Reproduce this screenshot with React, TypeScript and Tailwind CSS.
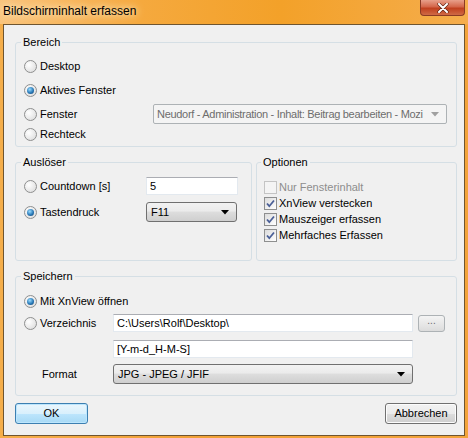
import React from 'react';

function Radio({ checked }: { checked?: boolean }) {
  return (
    <span className="flex h-[13px] w-[13px] shrink-0 items-center justify-center rounded-full border border-[#8e8f8f] bg-[radial-gradient(circle_at_35%_35%,#ffffff,#d8d8d8)]">
      {checked ? (
        <span className="h-[7px] w-[7px] rounded-full bg-[radial-gradient(circle_at_40%_35%,#9adcff,#2a7ab8_55%,#0d3a66)]" />
      ) : null}
    </span>
  );
}

function Check({ checked, disabled }: { checked?: boolean; disabled?: boolean }) {
  return (
    <span
      className={`flex h-[13px] w-[13px] shrink-0 items-center justify-center border ${
        disabled ? 'border-[#c4c4c4] bg-[#f4f4f4]' : 'border-[#8e8f8f] bg-[linear-gradient(135deg,#dcdcdc,#ffffff)]'
      }`}
    >
      {checked ? (
        <svg width="11" height="11" viewBox="0 0 11 11">
          <path d="M2 5.5 L4.3 8.2 L9 2.5" fill="none" stroke="#4a5f97" strokeWidth="1.8" />
        </svg>
      ) : null}
    </span>
  );
}

function Arrow({ color = '#000' }: { color?: string }) {
  return (
    <svg width="8" height="5" viewBox="0 0 8 5">
      <polygon points="0,0 8,0 4,4.5" fill={color} />
    </svg>
  );
}

function Combo({ value, className }: { value: string; className: string }) {
  return (
    <div
      className={`flex items-center rounded-[3px] border border-[#707070] bg-[linear-gradient(#f2f2f2,#ebebeb_45%,#dddddd_50%,#cfcfcf)] pl-[4px] pr-[7px] ${className}`}
    >
      <span className="flex-1 overflow-hidden whitespace-nowrap">{value}</span>
      <Arrow />
    </div>
  );
}

function TextBox({ value, className }: { value: string; className: string }) {
  return (
    <div
      className={`flex items-center border border-[#e3e9ef] border-t-[#abadb3] bg-white pl-[3px] overflow-hidden whitespace-nowrap ${className}`}
    >
      {value}
    </div>
  );
}

function Group({ title, className, children }: { title: string; className: string; children: React.ReactNode }) {
  return (
    <fieldset className={`rounded-[3px] border border-[#d5dfe5] ${className}`}>
      <legend className="ml-[-3px] px-[2px] leading-[13px]">{title}</legend>
      {children}
    </fieldset>
  );
}

export default function App() {
  return (
    <div className="flex h-[438px] w-[468px] flex-col bg-[linear-gradient(90deg,#f5ae4a,#f2a136_40%,#f3a43a)] font-['Liberation_Sans',Arial,sans-serif] text-[11px] leading-[13px] text-black">
      <div className="flex h-[24px] shrink-0 items-start bg-[linear-gradient(90deg,#f9c47c,#f5a93e_30%,#f3a129_60%,#f5ad4c)]">
        <span className="mt-[4px] pl-[3px] text-[12px] leading-[14px] [text-shadow:0_0_6px_#ffe8c4,0_0_10px_#ffe8c4]">
          Bildschirminhalt erfassen
        </span>
        <div className="ml-auto mr-[3px] flex h-[16px] w-[45px] items-center justify-center rounded-b-[4px] border border-t-0 border-[#8b3a24] bg-[linear-gradient(#e8a08a,#d4664a_45%,#c0401f_55%,#d06a45)]">
          <svg width="12" height="10" viewBox="0 0 12 10">
            <path d="M2 1 L10 9 M10 1 L2 9" stroke="#5a2010" strokeWidth="3.2" strokeLinecap="round" />
            <path d="M2 1 L10 9 M10 1 L2 9" stroke="#ffffff" strokeWidth="2" strokeLinecap="round" />
          </svg>
        </div>
      </div>

      <div className="mx-[3px] flex h-[412px] flex-col border border-[#6f5530] bg-[#f0f0f0] pl-[11px] pr-[7px]">
        <Group title="Bereich" className="mt-[11px] px-[8px] pb-[2px]">
          <div className="mt-[7px] flex flex-col">
            <div className="flex h-[20px] items-center gap-[3px]">
              <Radio />
              <span>Desktop</span>
            </div>
            <div className="mt-[4px] flex h-[20px] items-center gap-[3px]">
              <Radio checked />
              <span>Aktives Fenster</span>
            </div>
            <div className="mt-[4px] flex h-[20px] items-center">
              <div className="flex w-[129px] items-center gap-[3px]">
                <Radio />
                <span>Fenster</span>
              </div>
              <div className="flex h-[20px] w-[294px] items-center rounded-[2px] border border-[#adb2b5] bg-[#f4f4f4] pl-[3px] pr-[7px] text-[#6d6d6d]">
                <span className="flex-1 whitespace-nowrap tracking-[-0.3px]">
                  Neudorf - Administration - Inhalt: Beitrag bearbeiten - Mozi
                </span>
                <Arrow color="#a0a0a0" />
              </div>
            </div>
            <div className="flex h-[20px] items-center gap-[3px]">
              <Radio />
              <span>Rechteck</span>
            </div>
          </div>
        </Group>

        <div className="mt-[9px] flex gap-[4px]">
          <Group title="Auslöser" className="h-[105px] w-[237px] px-[8px]">
            <div className="mt-[7px] flex h-[20px] items-center">
              <div className="flex w-[122px] items-center gap-[3px]">
                <Radio />
                <span>Countdown [s]</span>
              </div>
              <TextBox value="5" className="h-[18px] w-[92px]" />
            </div>
            <div className="mt-[6px] flex h-[20px] items-center">
              <div className="flex w-[122px] items-center gap-[3px]">
                <Radio checked />
                <span>Tastendruck</span>
              </div>
              <Combo value="F11" className="h-[20px] w-[91px]" />
            </div>
          </Group>

          <Group title="Optionen" className="h-[105px] w-[201px] px-[7px]">
            <div className="mt-[10px] flex flex-col">
              <div className="flex h-[16px] items-center gap-[2px] text-[#8d8d8d]">
                <Check disabled />
                <span>Nur Fensterinhalt</span>
              </div>
              <div className="flex h-[16px] items-center gap-[2px]">
                <Check checked />
                <span>XnView verstecken</span>
              </div>
              <div className="flex h-[16px] items-center gap-[2px]">
                <Check checked />
                <span>Mauszeiger erfassen</span>
              </div>
              <div className="flex h-[16px] items-center gap-[2px]">
                <Check checked />
                <span>Mehrfaches Erfassen</span>
              </div>
            </div>
          </Group>
        </div>

        <Group title="Speichern" className="mt-[9px] px-[8px] pb-[11px]">
          <div className="mt-[8px] flex h-[20px] items-center gap-[3px]">
            <Radio checked />
            <span>Mit XnView öffnen</span>
          </div>
          <div className="mt-[2px] flex h-[20px] items-center">
            <div className="flex w-[89px] items-center gap-[3px]">
              <Radio />
              <span>Verzeichnis</span>
            </div>
            <TextBox value="C:\Users\Rolf\Desktop\" className="h-[18px] w-[300px]" />
            <div className="ml-[5px] flex h-[17px] w-[27px] items-start justify-center rounded-[3px] border border-[#adb2b5] bg-[linear-gradient(#f4f4f4,#e8e8e8_50%,#dcdcdc)] text-[10px] leading-[10px] text-[#6d6d6d]">
              ...
            </div>
          </div>
          <div className="mt-[7px] flex h-[18px] items-center pl-[89px]">
            <TextBox value="[Y-m-d_H-M-S]" className="h-[18px] w-[300px]" />
          </div>
          <div className="mt-[6px] flex h-[20px] items-center">
            <span className="w-[89px] pl-[18px]">Format</span>
            <Combo value="JPG - JPEG / JFIF" className="h-[20px] w-[300px]" />
          </div>
        </Group>

        <div className="mt-[7px] flex justify-between">
          <button className="flex h-[21px] w-[73px] items-center justify-center rounded-[3px] border border-[#3c7fb1] bg-[linear-gradient(#eaf6fd,#d9f0fc_50%,#bee6fd_50%,#a7d9f5)] shadow-[inset_0_0_0_1px_#bde6fd]">
            OK
          </button>
          <button className="flex h-[21px] w-[72px] items-center justify-center rounded-[3px] border border-[#707070] bg-[linear-gradient(#f2f2f2,#ebebeb_50%,#dddddd_50%,#cfcfcf)] shadow-[inset_0_0_0_1px_#fcfcfc]">
            Abbrechen
          </button>
        </div>
      </div>
    </div>
  );
}
